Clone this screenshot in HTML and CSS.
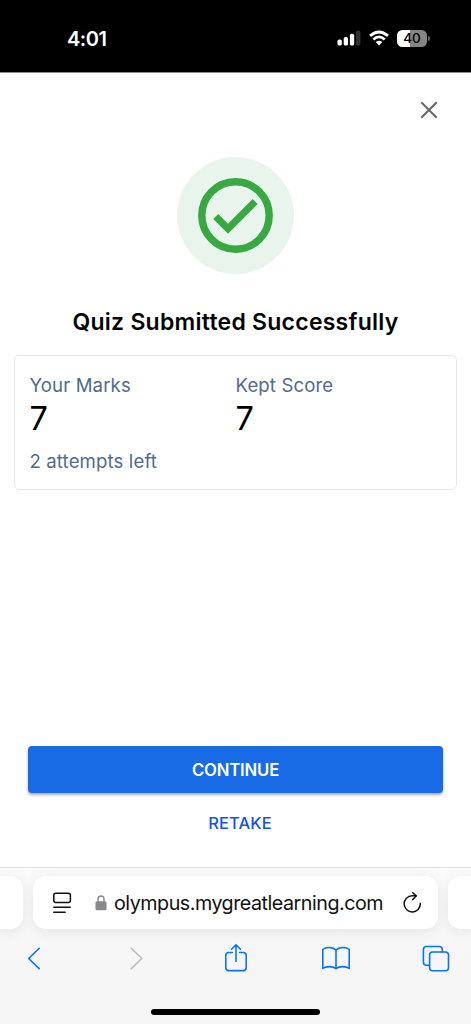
FILE: index.html
```html
<!DOCTYPE html>
<html lang="en">
<head>
<meta charset="utf-8">
<title>Quiz Submitted</title>
<link rel="stylesheet" href="styles.css">
</head>
<body>
<div class="phone">
  <header class="status">
    <span class="time">4:01</span>
    <div class="indicators">
      <svg width="24" height="16" viewBox="0 0 24 16" fill="#fff"><rect x="0.5" y="9.5" width="4.3" height="6.1" rx="1.7"/><rect x="6.7" y="7" width="4.3" height="8.6" rx="1.7"/><rect x="12.9" y="3.7" width="4.3" height="11.9" rx="1.7"/><rect x="19.1" y="0.6" width="4.3" height="15" rx="1.7" fill="#333"/></svg>
      <svg class="wifi" width="20" height="16" viewBox="0 0 20 16"><g fill="none" stroke="#fff" stroke-width="2.8"><path d="M1 5.9Q10 -2 19 5.9"/><path d="M4.3 9.5Q10 4.2 15.7 9.5"/></g><path d="M6.7 12Q10 9.4 13.3 12L10 15.6Z" fill="#fff"/></svg>
      <div class="battery">40</div>
      <i class="battery-tip"></i>
    </div>
  </header>
  <main class="result">
    <svg class="close" width="18" height="18" viewBox="0 0 18 18" fill="none" stroke="#666" stroke-width="2"><path d="M1.3 1.3 16.7 16.7M16.7 1.3 1.3 16.7"/></svg>
    <svg class="success" width="117" height="117" viewBox="0 0 117 117"><circle cx="58.5" cy="58.5" r="58.5" fill="#e9f5ec"/><circle cx="58.5" cy="58.5" r="33.7" fill="none" stroke="#38a843" stroke-width="7.4"/><path fill="#38a843" d="M36.2 62 41.2 57 51 66.8 75.7 42.1 80.7 47 51 76.8Z"/></svg>
    <h1 class="title">Quiz Submitted Successfully</h1>
    <section class="scores">
      <div class="score"><span class="label">Your Marks</span><span class="value">7</span><span class="label attempts">2 attempts left</span></div>
      <div class="score"><span class="label">Kept Score</span><span class="value">7</span></div>
    </section>
    <div class="actions">
      <button class="continue">CONTINUE</button>
      <button class="retake">RETAKE</button>
    </div>
  </main>
  <footer class="browser">
    <div class="tabs">
      <div class="tab previous"></div>
      <div class="tab address">
        <svg class="reader" width="20" height="22" viewBox="0 0 20 22" fill="none" stroke="#111" stroke-width="1.5" stroke-linecap="round"><rect x="1.8" y="1.2" width="16.6" height="9.3" rx="2"/><path d="M1.8 15.2H18.2M1.8 20.2H13.2"/></svg>
        <svg class="lock" width="12" height="16" viewBox="0 0 12 16"><path d="M3 7V4.3Q3 1 6 1T9 4.3V7" fill="none" stroke="#88888c" stroke-width="1.4"/><rect x=".5" y="6.3" width="11" height="9" rx="1.5" fill="#88888c"/></svg>
        <span class="url">olympus.mygreatlearning.com</span>
        <svg class="reload" width="20" height="22" viewBox="0 0 20 22" fill="none" stroke="#111" stroke-width="1.5" stroke-linecap="round" stroke-linejoin="round"><path d="M18.3 11.2A8.1 8.1 0 1 1 10.2 3.7H14M10.7 0.8 14.3 3.9 10.7 7.6"/></svg>
      </div>
      <div class="tab next"></div>
    </div>
    <nav class="toolbar">
      <svg width="30" height="30" viewBox="0 0 30 30"><path d="M19.2 5.3 8.7 15.5 19.2 25.6"/></svg>
      <svg class="disabled" width="30" height="30" viewBox="0 0 30 30"><path d="M11.3 5.3 21.8 15.5 11.3 25.6"/></svg>
      <svg width="30" height="30" viewBox="0 0 30 30"><path d="M11.4 9.5H7.7Q4.8 9.5 4.8 12.4V24.7Q4.8 27.6 7.7 27.6H22.3Q25.2 27.6 25.2 24.7V12.4Q25.2 9.5 22.3 9.5H18.6M15 18.4V1.8M10.6 6.2 15 1.7 19.4 6.2"/></svg>
      <svg width="30" height="30" viewBox="0 0 30 30"><path d="M15 7.2C12 3.7 5 3.7 1.8 6.5V25.4C5.3 23 11.7 23 15 25.6C18.3 23 24.7 23 28.2 25.4V6.5C25 3.7 18 3.7 15 7.2V25.6"/></svg>
      <svg width="30" height="30" viewBox="0 0 30 30"><path d="M8.5 22.2H5.4Q2.4 22.2 2.4 19.2V6.5Q2.4 3.5 5.4 3.5H18.3Q21.3 3.5 21.3 6.5V9"/><rect x="8.6" y="9" width="18.9" height="18.7" rx="3"/></svg>
    </nav>
    <div class="home"></div>
  </footer>
</div>
</body>
</html>
```
FILE: styles.css
```css
* { box-sizing: border-box; }
body { margin: 0; font-family: Inter, sans-serif; background: #fff; }
svg { display: block; flex: none; }
.phone { width: 471px; height: 1024px; display: flex; flex-direction: column; overflow: hidden; }
.status { height: 73px; flex: none; background: #000; border-bottom: 1px solid #8a8a8a; color: #fff; display: flex; justify-content: space-between; padding: 25px 41px 0 67px; }
.time { font-size: 20px; line-height: 28px; font-weight: 600; letter-spacing: -.5px; }
.indicators { display: flex; align-items: center; height: 26px; }
.wifi { margin-left: 8px; }
.battery { width: 30px; height: 17px; margin-left: 8px; border-radius: 5.5px; background: linear-gradient(90deg, #fff 43%, #858585 43%); color: #000; font-size: 13.5px; line-height: 17px; font-weight: 500; text-align: center; }
.battery-tip { width: 2px; height: 5px; margin-left: 1px; background: #666; border-radius: 0 2px 2px 0; }
.result { height: 794px; flex: none; display: flex; flex-direction: column; align-items: center; padding: 28px 14px 0; }
.close { align-self: flex-end; margin-right: 19px; }
.success { margin-top: 38px; }
.title { margin: 33px 0 0; font-size: 23px; line-height: 30px; font-weight: 580; letter-spacing: .25px; white-space: nowrap; color: #050505; }
.scores { width: 443px; height: 135px; margin-top: 18px; border: 1px solid #e6e9eb; border-radius: 5px; display: grid; grid-template-columns: 206px 1fr; padding: 17px 14.5px; }
.score { display: flex; flex-direction: column; }
.label { font-size: 18.6px; line-height: 24px; color: #536a8b; font-weight: 380; letter-spacing: .12px; }
.value { font-size: 32.5px; line-height: 40px; margin-top: 2px; color: #000; font-weight: 370; }
.attempts { margin-top: 10px; }
.actions { width: 415px; margin-top: 256px; display: flex; flex-direction: column; }
button { font-family: inherit; border: 0; padding: 0; }
.continue { height: 47px; border-radius: 4px; background: #186be5; color: #fff; font-size: 16.7px; font-weight: 580; letter-spacing: -.16px; box-shadow: 0 2px 3px #0005; }
.retake { width: 80px; height: 30px; align-self: center; margin: 15px 0 0 9px; background: transparent; color: #0f55e6; font-size: 16.5px; font-weight: 500; letter-spacing: .1px; }
.browser { height: 157px; flex: none; background: linear-gradient(#fafafa, #f6f6f6 60%); border-top: 1px solid #e0e0e0; display: flex; flex-direction: column; align-items: center; }
.tabs { width: 471px; height: 53px; margin-top: 8px; display: grid; grid-template-columns: 23px 405px 23px; gap: 10px; }
.tab { background: #fff; border-radius: 13px; box-shadow: 0 3px 14px #00000012; }
.previous { border-radius: 0 13px 13px 0; }
.next { border-radius: 13px 0 0 13px; }
.address { display: flex; align-items: center; padding: 0 16px 0 19px; }
.lock { margin-left: 23px; }
.url { margin-left: 7px; font-size: 19.7px; line-height: 28px; color: #111; width: 270px; white-space: nowrap; font-weight: 380; letter-spacing: -.48px; }
.reload { margin-left: auto; }
.toolbar { width: 471px; margin-top: 14px; padding: 0 20px; display: flex; justify-content: space-between; }
.toolbar svg { fill: none; stroke: #0873ff; stroke-width: 1.6; stroke-linecap: round; stroke-linejoin: round; }
.toolbar .disabled { stroke: #bcbcbe; }
.home { width: 169px; height: 6px; margin-top: 36px; background: #000; border-radius: 3px; }
```
